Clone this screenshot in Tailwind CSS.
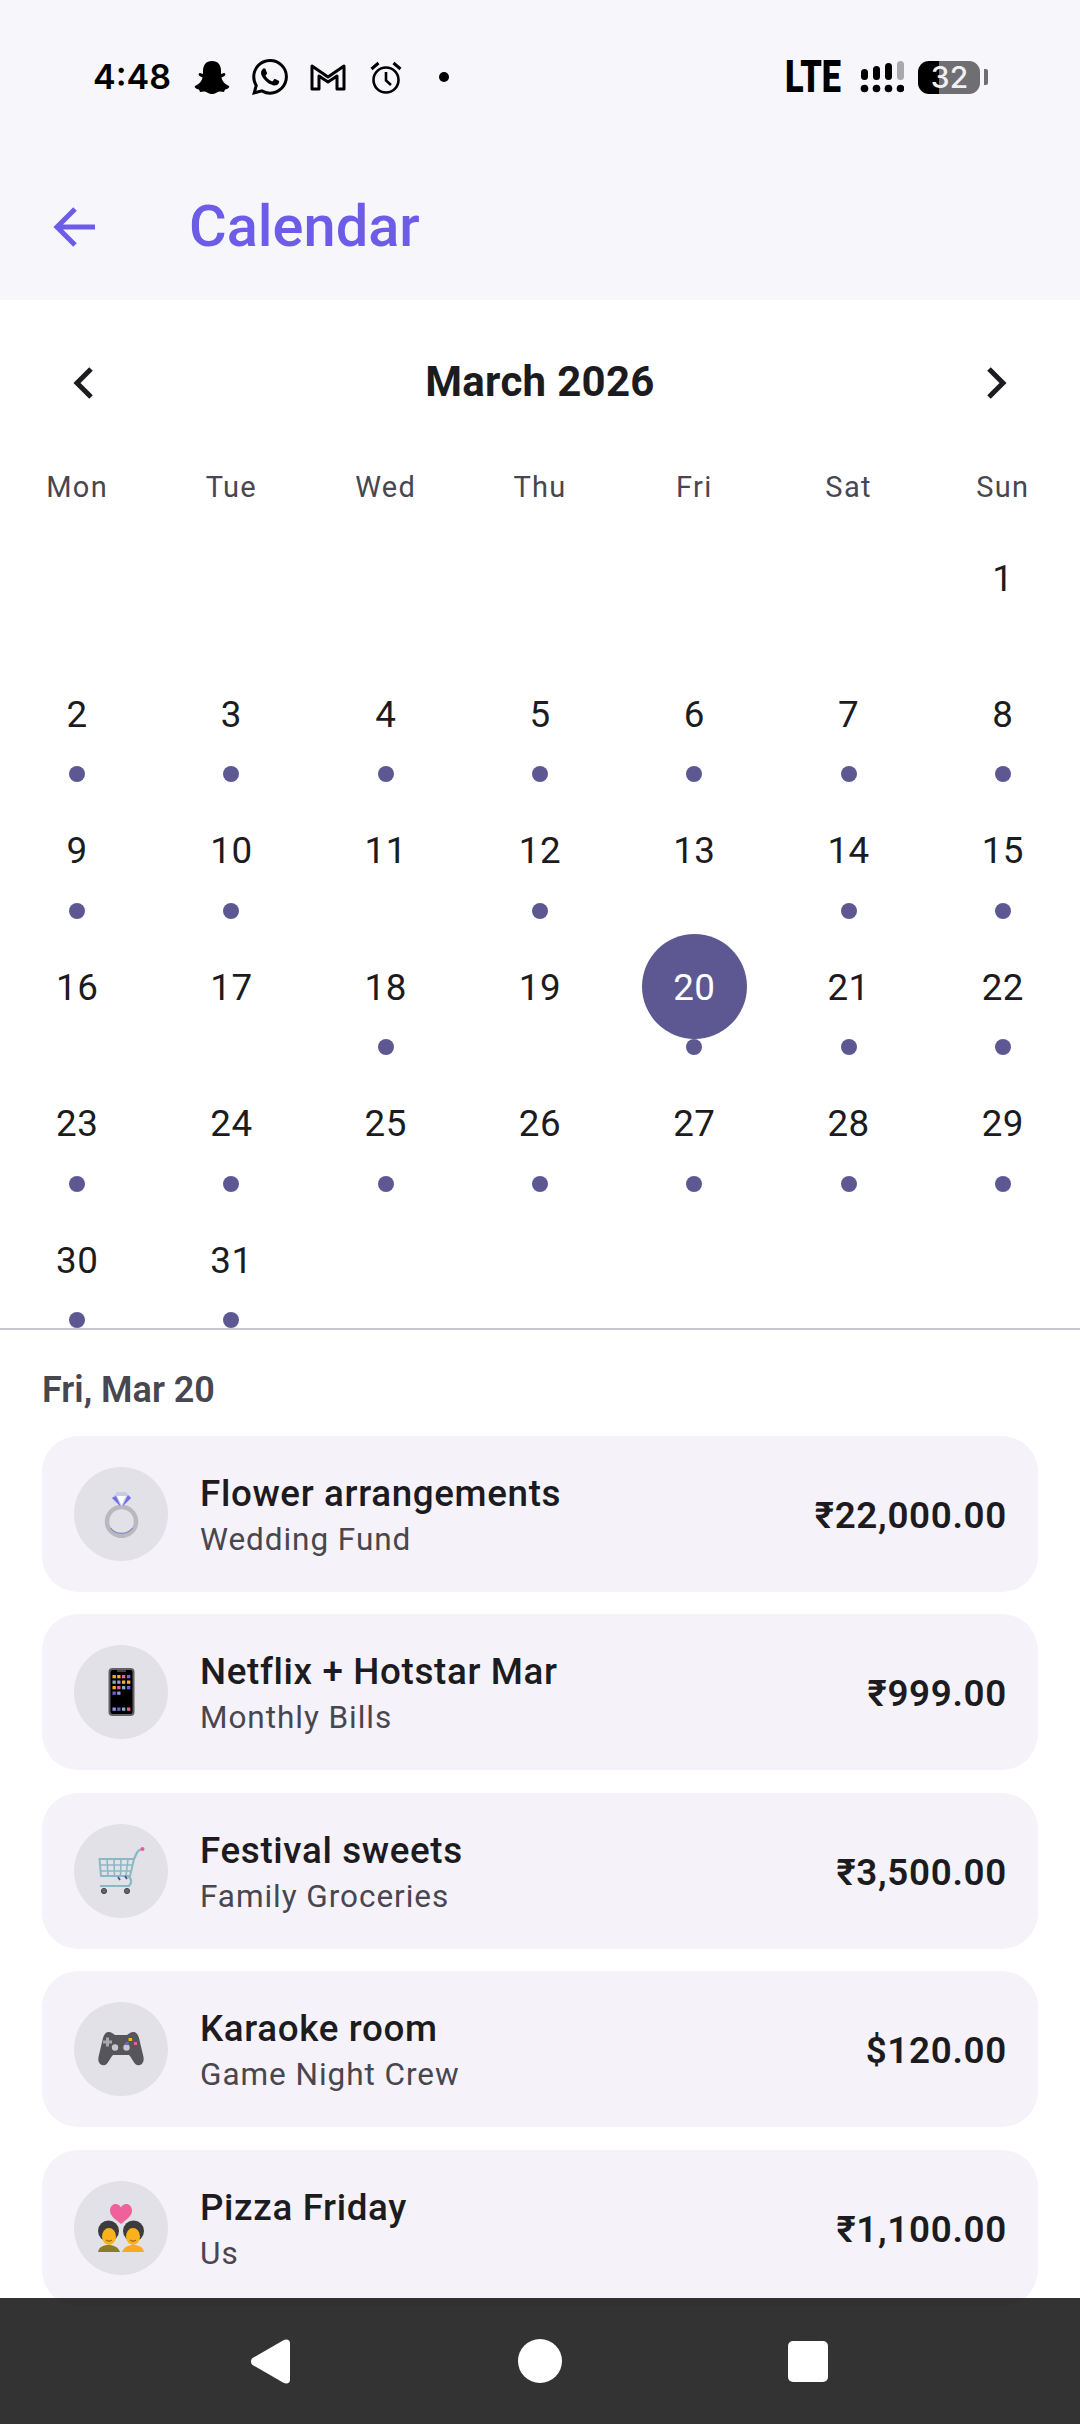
<!DOCTYPE html>
<html lang="en">
<head>
  <meta charset="UTF-8" />
  <title>Calendar</title>
  <script src="https://cdn.jsdelivr.net/npm/@tailwindcss/browser@4"></script>
</head>
<body class="[font-family:Roboto,sans-serif] bg-white">
  <div class="relative w-[1080px] h-[2424px] overflow-hidden bg-white flex flex-col">

    <!-- Status bar + app bar -->
    <header class="bg-[#f6f6fb] h-[300px] shrink-0">
      <div class="h-[154px] pl-[93px] pr-[92px] flex justify-between items-start text-black">
        <div class="flex items-center h-[40px] mt-[57px]">
          <span class="[font-family:Inter,sans-serif] font-semibold text-[34px] leading-none w-[101px]">4:48</span>
          <svg class="w-[36px] h-[34px]" viewBox="0 0 36 34" fill="#000"><path d="M18 1C24 1 27 5 27 11L27 14L30 13C31.5 13 32 15 30.5 16L27.5 17.5C28 21 31 24.5 35 26C36 27 34 29 31 29.5L30 32L26 31.5C23 31.5 22 34 18 34C14 34 13 31.5 10 31.5L6 32L5 29.5C2 29 0 27 1 26C5 24.5 8 21 8.5 17.5L5.5 16C4 15 4.5 13 6 13L9 14L9 11C9 5 12 1 18 1Z"/></svg>
          <svg class="w-[36px] h-[36px] ml-[22px]" viewBox="0 0 24 24" fill="#000"><path d="M17.472 14.382c-.297-.149-1.758-.867-2.03-.967-.273-.099-.471-.148-.67.15-.197.297-.767.966-.94 1.164-.173.199-.347.223-.644.075-.297-.15-1.255-.463-2.39-1.475-.883-.788-1.48-1.761-1.653-2.059-.173-.297-.018-.458.13-.606.134-.133.298-.347.446-.52.149-.174.198-.298.298-.497.099-.198.05-.371-.025-.52-.075-.149-.669-1.612-.916-2.207-.242-.579-.487-.5-.669-.51-.173-.008-.371-.01-.57-.01-.198 0-.52.074-.792.372-.272.297-1.04 1.016-1.04 2.479 0 1.462 1.065 2.875 1.213 3.074.149.198 2.096 3.2 5.077 4.487.709.306 1.262.489 1.694.625.712.227 1.36.195 1.871.118.571-.085 1.758-.719 2.006-1.413.248-.694.248-1.289.173-1.413-.074-.124-.272-.198-.57-.347m-5.421 7.403h-.004a9.87 9.87 0 01-5.031-1.378l-.361-.214-3.741.982.998-3.648-.235-.374a9.86 9.86 0 01-1.51-5.26c.001-5.45 4.436-9.884 9.888-9.884 2.64 0 5.122 1.03 6.988 2.898a9.825 9.825 0 012.893 6.994c-.003 5.45-4.437 9.884-9.885 9.884m8.413-18.297A11.815 11.815 0 0012.05 0C5.495 0 .16 5.335.157 11.892c0 2.096.547 4.142 1.588 5.945L.057 24l6.305-1.654a11.882 11.882 0 005.683 1.448h.005c6.554 0 11.89-5.335 11.893-11.893a11.821 11.821 0 00-3.48-8.413z"/></svg>
          <svg class="w-[36px] h-[28px] ml-[22px]" viewBox="0 0 36 28" fill="none" stroke="#000" stroke-width="3" stroke-linejoin="round"><path d="M2 26V3L18 14L34 3V26H27V13L18 19L9 13V26Z"/></svg>
          <svg class="w-[32px] h-[33px] ml-[24px]" viewBox="0 0 32 33" fill="none" stroke="#000" stroke-width="2.6"><circle cx="16" cy="19" r="12.5"/><path d="M16 11V19.5L21 24"/><path d="M1.5 8L8.5 2M30.5 8L23.5 2" stroke-width="3"/></svg>
          <span class="w-[10px] h-[10px] rounded-full bg-black ml-[37px]"></span>
        </div>

        <div class="flex items-center h-[40px] mt-[57px]">
          <span class="font-black text-[44px] leading-none w-[75px] -ml-[8px] inline-block origin-left scale-x-[.78]">LTE</span>
          <svg class="w-[44px] h-[32px] mr-[14px]" viewBox="0 0 44 32" fill="#000">
            <rect x="1" y="8" width="7" height="11" rx="3.5"/><circle cx="4.5" cy="27.5" r="3.8"/>
            <rect x="13" y="5" width="7" height="14" rx="3.5"/><circle cx="16.5" cy="27.5" r="3.8"/>
            <rect x="25" y="2" width="7" height="17" rx="3.5"/><circle cx="28.5" cy="27.5" r="3.8"/>
            <rect x="37" y="0" width="7" height="19" rx="3.5" fill="#a9a9ad"/><circle cx="40.5" cy="27.5" r="3.8"/>
          </svg>
          <div class="relative flex w-[62px] h-[33px] rounded-[11px] overflow-hidden">
            <span class="w-[21px] bg-black"></span>
            <span class="flex-1 bg-[#6f6e73]"></span>
            <span class="absolute inset-0 flex items-center justify-center pl-[1px] [font-family:Inter,sans-serif] font-medium text-[30px] leading-none text-[#f1f1f4]">32</span>
          </div>
          <span class="w-[4px] h-[16px] ml-[4px] rounded-r-[2px] bg-[#6f6e73]"></span>
        </div>
      </div>

      <div class="h-[146px] flex items-center pl-[53px]">
        <svg class="w-[42px] h-[42px]" viewBox="0 0 42 42" fill="none" stroke="#6c5ce7" stroke-width="5"><path d="M42 21H4M22 3L4 21L22 39"/></svg>
        <h1 class="ml-[94px] text-[57.75px] leading-none font-medium text-[#6c5ce7]">Calendar</h1>
      </div>
    </header>

    <!-- Month picker -->
    <section class="shrink-0">
      <div class="h-[165px] flex items-center justify-between pl-[73px] pr-[73px] text-[#1c1b20]">
        <svg class="w-[20px] h-[32px]" viewBox="0 0 20 32" fill="none" stroke="#1c1b20" stroke-width="5"><path d="M18 2L4 16L18 30"/></svg>
        <h2 class="mb-[2px] text-[42px] leading-none font-bold tracking-[.3px]">March 2026</h2>
        <svg class="w-[20px] h-[32px]" viewBox="0 0 20 32" fill="none" stroke="#1c1b20" stroke-width="5"><path d="M2 2L16 16L2 30"/></svg>
      </div>
      <div class="h-[45px] grid grid-cols-7 text-center items-center text-[29px] leading-none font-normal tracking-[1.3px] text-[#48464f]">
        <span>Mon</span><span>Tue</span><span>Wed</span><span>Thu</span><span>Fri</span><span>Sat</span><span>Sun</span>
      </div>
      <div id="days" class="grid grid-cols-7"></div>
    </section>
    <div class="h-[2px] shrink-0 bg-[#cac6d0]"></div>

    <!-- Selected day -->
    <main class="flex-1 min-h-0 px-[42px]">
      <h3 class="h-[105.5px] pt-[39px] text-[36px] leading-[42px] font-semibold text-[#48464f]">Fri, Mar 20</h3>
      <ul class="flex flex-col gap-[22.5px]">
        <li class="h-[156px] rounded-[36px] bg-[#f5f2fa] flex items-center pl-[32px] pr-[31px]">
          <div class="w-[94px] h-[94px] rounded-full bg-[#e3e1e8] flex items-center justify-center shrink-0">
            <svg class="w-[48px] h-[48px]" viewBox="0 0 48 48" fill="none">
              <circle cx="24.5" cy="31.5" r="14.5" stroke="#b9b9bd" stroke-width="4.5"/>
              <path d="M13.5 38a14 14 0 0 0 22 0" stroke="#7d84c8" stroke-width="1.2"/>
              <path d="M15 8L20 2H29L34 8L24.5 17Z" fill="#c9cbe8"/>
              <path d="M15 8L19 6L24 17Z" fill="#6e6ee6"/>
              <path d="M34 8L31 5L25 17Z" fill="#6e6ee6"/>
              <path d="M20 6H29L24.5 15Z" fill="#fff"/>
            </svg>
          </div>
          <div class="ml-[32px] flex-1 pt-[8px]">
            <div class="text-[36.75px] leading-[43px] font-medium tracking-[.65px] text-[#1c1b20]">Flower arrangements</div>
            <div class="text-[31.5px] leading-[49px] tracking-[.95px] text-[#48464f]">Wedding Fund</div>
          </div>
          <div class="pt-[3px] text-[36.75px] font-semibold tracking-[.7px] text-[#1c1b20]">₹22,000.00</div>
        </li>

        <li class="h-[156px] rounded-[36px] bg-[#f5f2fa] flex items-center pl-[32px] pr-[31px]">
          <div class="w-[94px] h-[94px] rounded-full bg-[#e3e1e8] flex items-center justify-center shrink-0">
            <svg class="w-[48px] h-[48px]" viewBox="0 0 48 48">
              <rect x="12.5" y="1" width="24" height="46" rx="3" fill="#000" stroke="#626266" stroke-width="2"/>
              <rect x="20" y="2" width="9" height="2" fill="#444"/>
              <g>
                <rect x="15.5" y="7" width="3.3" height="3.3" fill="#f5b21f"/><rect x="20.2" y="7" width="3.3" height="3.3" fill="#f5b21f"/><rect x="25" y="7" width="3.3" height="3.3" fill="#ee5b98"/><rect x="30" y="7" width="3.3" height="3.3" fill="#6d63d8"/>
                <rect x="15.5" y="12.5" width="3.3" height="3.3" fill="#78b5c0"/><rect x="20.2" y="12.5" width="3.3" height="3.3" fill="#9a95e0"/><rect x="25" y="12.5" width="3.3" height="3.3" fill="#f5b21f"/><rect x="30" y="12.5" width="3.3" height="3.3" fill="#f5b21f"/>
                <rect x="15.5" y="18" width="3.3" height="3.3" fill="#f5b21f"/><rect x="20.2" y="18" width="3.3" height="3.3" fill="#ee5b98"/><rect x="25" y="18" width="3.3" height="3.3" fill="#78b5c0"/><rect x="30" y="18" width="3.3" height="3.3" fill="#6d63d8"/>
                <rect x="15.5" y="23.5" width="3.3" height="3.3" fill="#6d63d8"/><rect x="20.2" y="23.5" width="3.3" height="3.3" fill="#9a95e0"/>
                <rect x="15.5" y="39.5" width="3.3" height="3.3" fill="#9a95e0"/><rect x="20.2" y="39.5" width="3.3" height="3.3" fill="#6d63d8"/><rect x="25" y="39.5" width="3.3" height="3.3" fill="#78b5c0"/><rect x="30" y="39.5" width="3.3" height="3.3" fill="#ee5b98"/>
              </g>
            </svg>
          </div>
          <div class="ml-[32px] flex-1 pt-[8px]">
            <div class="text-[36.75px] leading-[43px] font-medium tracking-[.65px] text-[#1c1b20]">Netflix + Hotstar Mar</div>
            <div class="text-[31.5px] leading-[49px] tracking-[.95px] text-[#48464f]">Monthly Bills</div>
          </div>
          <div class="pt-[3px] text-[36.75px] font-semibold tracking-[.7px] text-[#1c1b20]">₹999.00</div>
        </li>

        <li class="h-[156px] rounded-[36px] bg-[#f5f2fa] flex items-center pl-[32px] pr-[31px]">
          <div class="w-[94px] h-[94px] rounded-full bg-[#e3e1e8] flex items-center justify-center shrink-0">
            <svg class="w-[48px] h-[48px]" viewBox="0 0 48 48" fill="none" stroke="#8ab8c4" stroke-width="1.6">
              <path d="M2.5 12H37L33 29H4Z" stroke-width="2"/>
              <path d="M10 12L11 29M17 12L17.5 29M24 12L23.5 29M31 12L29 29M3 18H36M3.5 24H34.5"/>
              <path d="M37 12L40 5.5C41 3.5 43 2.5 45 2" stroke-width="2.2"/>
              <path d="M31 29C35 32 35 36 32 39H3" stroke-width="2.2"/>
              <path d="M21 30L23 33M28 29L30 32" stroke="#4d4aa8" stroke-width="1.8"/>
              <circle cx="45.5" cy="2" r="2" fill="#ee5b98" stroke="none"/>
              <circle cx="7" cy="44" r="2.6" fill="#666" stroke="#444" stroke-width="1"/>
              <circle cx="30" cy="44" r="2.6" fill="#666" stroke="#444" stroke-width="1"/>
            </svg>
          </div>
          <div class="ml-[32px] flex-1 pt-[8px]">
            <div class="text-[36.75px] leading-[43px] font-medium tracking-[.65px] text-[#1c1b20]">Festival sweets</div>
            <div class="text-[31.5px] leading-[49px] tracking-[.95px] text-[#48464f]">Family Groceries</div>
          </div>
          <div class="pt-[3px] text-[36.75px] font-semibold tracking-[.7px] text-[#1c1b20]">₹3,500.00</div>
        </li>

        <li class="h-[156px] rounded-[36px] bg-[#f5f2fa] flex items-center pl-[32px] pr-[31px]">
          <div class="w-[94px] h-[94px] rounded-full bg-[#e3e1e8] flex items-center justify-center shrink-0">
            <svg class="w-[48px] h-[48px]" viewBox="0 0 48 48">
              <path d="M12 7C9 7 7 9 6 13L1.5 32C.5 38 4 41 8 40C11 39 13 33 16 30H32C35 33 37 39 40 40C44 41 47.5 38 46.5 32L42 13C41 9 39 7 36 7C33 7 32 9 30 10H18C16 9 15 7 12 7Z" fill="#55555a"/>
              <path d="M9 12.5h3v3h3v3h-3v3H9v-3H6v-3h3Z" fill="#a7a7ac"/>
              <circle cx="18" cy="22.5" r="3.2" fill="#c8c8cc"/><circle cx="29.5" cy="22.5" r="3.2" fill="#c8c8cc"/>
              <rect x="31.5" y="13" width="3.6" height="3" fill="#f5b21f"/><rect x="28.5" y="17" width="3" height="3" fill="#6d63d8"/><rect x="37" y="17" width="3" height="3" fill="#ee5b98"/>
            </svg>
          </div>
          <div class="ml-[32px] flex-1 pt-[8px]">
            <div class="text-[36.75px] leading-[43px] font-medium tracking-[.65px] text-[#1c1b20]">Karaoke room</div>
            <div class="text-[31.5px] leading-[49px] tracking-[.95px] text-[#48464f]">Game Night Crew</div>
          </div>
          <div class="pt-[3px] text-[36.75px] font-semibold tracking-[.7px] text-[#1c1b20]">$120.00</div>
        </li>

        <li class="h-[156px] rounded-[36px] bg-[#f5f2fa] flex items-center pl-[32px] pr-[31px]">
          <div class="w-[94px] h-[94px] rounded-full bg-[#e3e1e8] flex items-center justify-center shrink-0">
            <svg class="w-[48px] h-[48px]" viewBox="0 0 48 48">
              <path d="M24 20C18 15 13 12 13 6.5C13 2.5 16 0 18.5 0C21 0 23 1.5 24 3.5C25 1.5 27 0 29.5 0C32 0 35 2.5 35 6.5C35 12 30 15 24 20Z" fill="#f0609a"/>
              <path d="M1 48C2 43 6 41 11.5 41C17 41 21 43 23 48Z" fill="#8a7d28"/>
              <path d="M25 48C27 43 31 41 36.5 41C42 41 46 43 47 48Z" fill="#f9a825"/>
              <ellipse cx="11.5" cy="27" rx="10.5" ry="10.5" fill="#3c3c3f"/><ellipse cx="36.5" cy="27" rx="10.5" ry="10.5" fill="#3c3c3f"/>
              <ellipse cx="12" cy="32.5" rx="7" ry="8.5" fill="#f9b21c"/><ellipse cx="36" cy="32.5" rx="7" ry="8.5" fill="#f9b21c"/>
              <path d="M9 36C10.5 37.5 13.5 37.5 15 36M33 36C34.5 37.5 37.5 37.5 39 36" stroke="#7a5510" stroke-width="1" fill="none"/>
            </svg>
          </div>
          <div class="ml-[32px] flex-1 pt-[8px]">
            <div class="text-[36.75px] leading-[43px] font-medium tracking-[.65px] text-[#1c1b20]">Pizza Friday</div>
            <div class="text-[31.5px] leading-[49px] tracking-[.95px] text-[#48464f]">Us</div>
          </div>
          <div class="pt-[3px] text-[36.75px] font-semibold tracking-[.7px] text-[#1c1b20]">₹1,100.00</div>
        </li>
      </ul>
    </main>

    <!-- Android nav bar, sits over the list -->
    <nav class="absolute left-0 right-0 bottom-0 h-[126px] bg-black/80">
      <div class="relative h-full flex items-center">
        <svg class="w-[40px] h-[45px] ml-[251px]" viewBox="0 0 40 45" fill="#fff"><path d="M1.5 19L32 1.5C35.5 -.5 39 .5 39 4V41C39 44.5 35.5 45.5 32 43.5L1.5 26C-.5 24.5 -.5 20.5 1.5 19Z"/></svg>
        <span class="w-[44px] h-[44px] rounded-full bg-white ml-[227px]"></span>
        <span class="w-[40px] h-[41px] rounded-[5px] bg-white ml-[226px]"></span>
      </div>
    </nav>
  </div>

  <script>
    const noDot = [1, 11, 13, 16, 17, 19];
    const selected = 20;
    const days = document.getElementById("days");

    // March 2026 starts on a Sunday, so six blank cells first
    for (let i = 0; i < 6; i++) days.insertAdjacentHTML("beforeend", '<div class="h-[136.4px]"></div>');

    for (let d = 1; d <= 31; d++) {
      const circle = d === selected
        ? "bg-[#5d5891] text-white"
        : "text-[#1c1b20]";
      const dot = noDot.includes(d) ? "" : '<span class="w-[16px] h-[16px] rounded-full bg-[#5d5891]"></span>';
      days.insertAdjacentHTML("beforeend", `
        <div class="h-[136.4px] pt-[15px] flex flex-col items-center">
          <div class="w-[105px] h-[105px] shrink-0 pt-[3px] rounded-full flex items-center justify-center text-[36.75px] leading-none font-normal tracking-[.5px] ${circle}">${d}</div>
          ${dot}
        </div>`);
    }
  </script>
</body>
</html>
